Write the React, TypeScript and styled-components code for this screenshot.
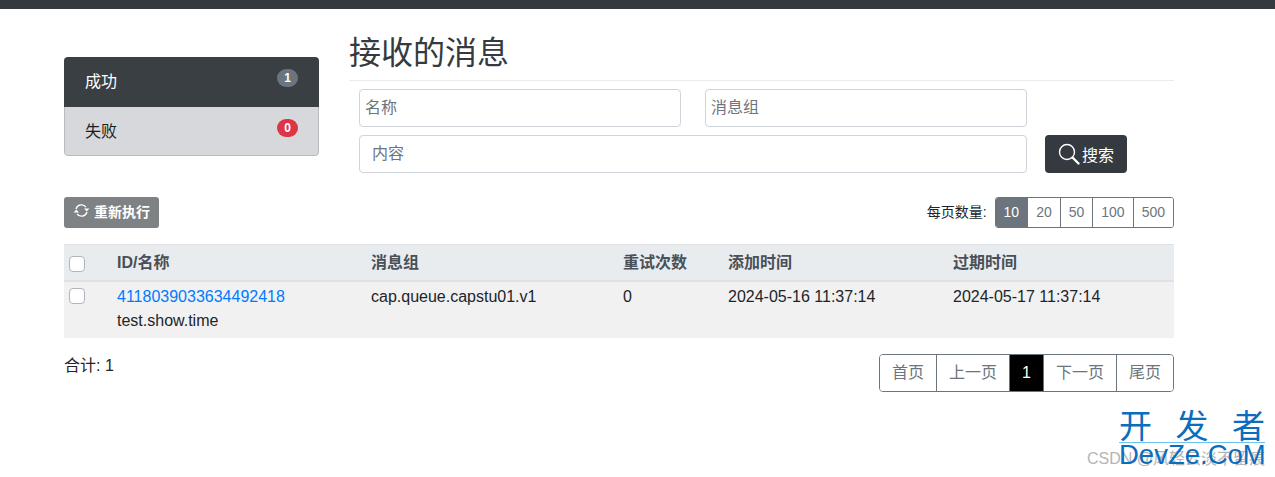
import React from 'react'
import styled, { createGlobalStyle } from 'styled-components'

const sans = `"Liberation Sans", "Noto Sans CJK SC", sans-serif`

const GlobalStyle = createGlobalStyle`
  html, body {
    margin: 0;
    padding: 0;
    background: #fff;
    overflow: hidden;
  }
  * {
    box-sizing: border-box;
  }
  body {
    font-family: ${sans};
    font-size: 16px;
    line-height: 24px;
    color: #212529;
  }
`

const pageSizes = ['10', '20', '50', '100', '500']

export default function App() {
  return (
    <>
      <GlobalStyle />
      <TopBar />
      <Page>
        <Header>
          <SideNav>
            <SideItem $active>
              成功
              <Badge $color="#6c757d">1</Badge>
            </SideItem>
            <SideItem>
              失败
              <Badge $color="#dc3545">0</Badge>
            </SideItem>
          </SideNav>
          <Main>
            <Title>接收的消息</Title>
            <Filters>
              <FieldRow>
                <Field $width={322} $pad={5} placeholder="名称" />
                <Field $width={322} $pad={5} placeholder="消息组" />
              </FieldRow>
              <FieldRow>
                <Field $width={668} $pad={12} placeholder="内容" />
                <SearchButton>
                  <svg width="22" height="22" viewBox="0 0 22 22" fill="none" stroke="#fff">
                    <circle cx="9" cy="9" r="7.5" strokeWidth="1.4" />
                    <path d="M14.5 14.5L20.5 20.5" strokeWidth="2.4" strokeLinecap="round" />
                  </svg>
                  搜索
                </SearchButton>
              </FieldRow>
            </Filters>
          </Main>
        </Header>

        <Toolbar>
          <RetryButton>
            <svg width="17" height="15" viewBox="0 0 17 15" fill="none">
              <path d="M3 6A5.6 5.6 0 0 1 13 4.2" stroke="#fff" strokeWidth="1.3" />
              <path d="M14 9A5.6 5.6 0 0 1 4 10.8" stroke="#fff" strokeWidth="1.3" />
              <path d="M11 5.5H16.4L13.7 8.6Z" fill="#fff" />
              <path d="M0.6 9.5H6L3.3 6.4Z" fill="#fff" />
            </svg>
            重新执行
          </RetryButton>
          <PageSize>
            <PageSizeLabel>每页数量:</PageSizeLabel>
            <PageSizeGroup>
              {pageSizes.map((size) => (
                <PageSizeButton key={size} $active={size === '10'}>
                  {size}
                </PageSizeButton>
              ))}
            </PageSizeGroup>
          </PageSize>
        </Toolbar>

        <Table>
          <thead>
            <tr>
              <HeadCell $width={48}>
                <CheckBox />
              </HeadCell>
              <HeadCell $width={254}>ID/名称</HeadCell>
              <HeadCell $width={252}>消息组</HeadCell>
              <HeadCell $width={105}>重试次数</HeadCell>
              <HeadCell $width={225}>添加时间</HeadCell>
              <HeadCell $width={226}>过期时间</HeadCell>
            </tr>
          </thead>
          <tbody>
            <tr>
              <BodyCell>
                <CheckBox />
              </BodyCell>
              <BodyCell>
                <IdLink>4118039033634492418</IdLink>
                <div>test.show.time</div>
              </BodyCell>
              <BodyCell>cap.queue.capstu01.v1</BodyCell>
              <BodyCell>0</BodyCell>
              <BodyCell>2024-05-16 11:37:14</BodyCell>
              <BodyCell>2024-05-17 11:37:14</BodyCell>
            </tr>
          </tbody>
        </Table>

        <Footer>
          <Total>合计: 1</Total>
          <Pager>
            <PagerItem>首页</PagerItem>
            <PagerItem>上一页</PagerItem>
            <PagerItem $active>1</PagerItem>
            <PagerItem>下一页</PagerItem>
            <PagerItem>尾页</PagerItem>
          </Pager>
        </Footer>
      </Page>

      <Watermark>
        <WatermarkGrey>CSDN @风轻云淡不留痕</WatermarkGrey>
        <WatermarkTop>
          <span>开</span>
          <span>发</span>
          <span>者</span>
        </WatermarkTop>
        <WatermarkBottom>DevZe.CoM</WatermarkBottom>
      </Watermark>
    </>
  )
}

const TopBar = styled.div`
  height: 9px;
  background: #343a40;
`

const Page = styled.div`
  width: 1110px;
  margin-left: 64px;
`

const Header = styled.div`
  display: flex;
  align-items: flex-start;
`

const SideNav = styled.div`
  width: 255px;
  margin-top: 48px;
  margin-right: 30px;
  flex: none;
  border-radius: 4px;
  overflow: hidden;
`

const SideItem = styled.div<{ $active?: boolean }>`
  display: flex;
  justify-content: space-between;
  height: ${(p) => (p.$active ? '50px' : '49px')};
  padding: 13px ${(p) => (p.$active ? '21px' : '20px')} 0;
  color: ${(p) => (p.$active ? '#fff' : '#1b1e21')};
  background: ${(p) => (p.$active ? '#3a3f44' : '#d6d8db')};
  border: ${(p) => (p.$active ? '0' : '1px solid #b9bbbe')};
  border-top: 0;
  border-radius: ${(p) => (p.$active ? '0' : '0 0 4px 4px')};
`

const Badge = styled.span<{ $color: string }>`
  width: 21px;
  height: 18px;
  margin-top: -1px;
  border-radius: 9px;
  background: ${(p) => p.$color};
  color: #fff;
  font-size: 12px;
  font-weight: 700;
  line-height: 18px;
  text-align: center;
`

const Main = styled.div`
  flex: 1;
`

const Title = styled.h1`
  margin: 0;
  height: 72px;
  padding-top: 20px;
  font-size: 32px;
  font-weight: 400;
  line-height: 48px;
  color: #343a40;
  border-bottom: 1px solid #e9ecef;
`

const Filters = styled.div`
  padding: 8px 10px 0;
  display: flex;
  flex-direction: column;
  gap: 8px;
`

const FieldRow = styled.div`
  display: flex;
  gap: 24px;
`

const Field = styled.input<{ $width: number; $pad: number }>`
  width: ${(p) => p.$width}px;
  height: 38px;
  padding: 0 ${(p) => p.$pad}px;
  border: 1px solid #ced4da;
  border-radius: 4px;
  font-family: ${sans};
  font-size: 16px;
  &::placeholder {
    color: #6c757d;
    opacity: 1;
  }
`

const SearchButton = styled.button`
  display: flex;
  align-items: center;
  justify-content: center;
  gap: 2px;
  width: 82px;
  height: 38px;
  margin-left: -6px;
  padding: 0;
  border: 0;
  border-radius: 4px;
  background: #343a40;
  color: #fff;
  font-family: ${sans};
  font-size: 16px;
`

const Toolbar = styled.div`
  display: flex;
  justify-content: space-between;
  align-items: center;
  margin-top: 24px;
`

const RetryButton = styled.button`
  display: flex;
  align-items: center;
  gap: 4px;
  width: 95px;
  height: 31px;
  padding: 0 0 4px 9px;
  border: 0;
  border-radius: 3px;
  background: #7f8285;
  color: #fff;
  font-family: ${sans};
  font-size: 14px;
  font-weight: 700;
  white-space: nowrap;
`

const PageSize = styled.div`
  display: flex;
  align-items: center;
  gap: 8px;
`

const PageSizeLabel = styled.span`
  font-size: 14px;
  margin-bottom: 2px;
`

const PageSizeGroup = styled.div`
  display: flex;
  border: 1px solid #6c757d;
  border-radius: 3px;
  overflow: hidden;
`

const PageSizeButton = styled.span<{ $active?: boolean }>`
  height: 29px;
  padding: 0 8px;
  font-size: 14px;
  line-height: 29px;
  color: ${(p) => (p.$active ? '#fff' : '#6c757d')};
  background: ${(p) => (p.$active ? '#6c757d' : '#fff')};
  & + & {
    border-left: 1px solid #6c757d;
  }
`

const Table = styled.table`
  width: 1110px;
  margin-top: 16px;
  border-collapse: collapse;
  table-layout: fixed;
  background: #f1f1f1;
`

const HeadCell = styled.th<{ $width: number }>`
  width: ${(p) => p.$width}px;
  height: 36px;
  padding: 5px 5px 4px;
  text-align: left;
  vertical-align: middle;
  font-size: 16px;
  font-weight: 700;
  color: #495057;
  background: #e9ecef;
  border-top: 1px solid #dee2e6;
  border-bottom: 2px solid #dee2e6;
`

const BodyCell = styled.td`
  height: 57px;
  padding: 3px 5px;
  vertical-align: top;
  font-size: 16px;
`

const CheckBox = styled.span`
  display: block;
  width: 16px;
  height: 16px;
  background: #fff;
  border: 1px solid #adb5bd;
  border-radius: 4px;
  margin-top: 3px;
`

const IdLink = styled.a`
  display: block;
  color: #007bff;
`

const Footer = styled.div`
  display: flex;
  justify-content: space-between;
  align-items: flex-start;
  margin-top: 16px;
`

const Total = styled.div`
  font-size: 16px;
`

const Pager = styled.div`
  display: flex;
  height: 38px;
  border: 1px solid #6c757d;
  border-radius: 4px;
  overflow: hidden;
`

const PagerItem = styled.span<{ $active?: boolean }>`
  padding: 0 12px;
  line-height: 36px;
  color: ${(p) => (p.$active ? '#fff' : '#6c757d')};
  background: ${(p) => (p.$active ? '#000' : '#fff')};
  & + & {
    border-left: 1px solid #6c757d;
  }
`

const Watermark = styled.div`
  position: absolute;
  left: 1119px;
  top: 409px;
  width: 146px;
  color: #0b6dbd;
`

const WatermarkGrey = styled.div`
  position: absolute;
  right: 0;
  top: 39px;
  white-space: nowrap;
  font-size: 16px;
  line-height: 22px;
  color: #b5b5b5;
`

const WatermarkTop = styled.div`
  position: relative;
  display: flex;
  justify-content: space-between;
  height: 34px;
  font-size: 33px;
  line-height: 36px;
  border-bottom: 1px solid #6cc3ee;
  white-space: nowrap;
`

const WatermarkBottom = styled.div`
  position: relative;
  font-size: 27.5px;
  line-height: 24px;
  white-space: nowrap;
`
